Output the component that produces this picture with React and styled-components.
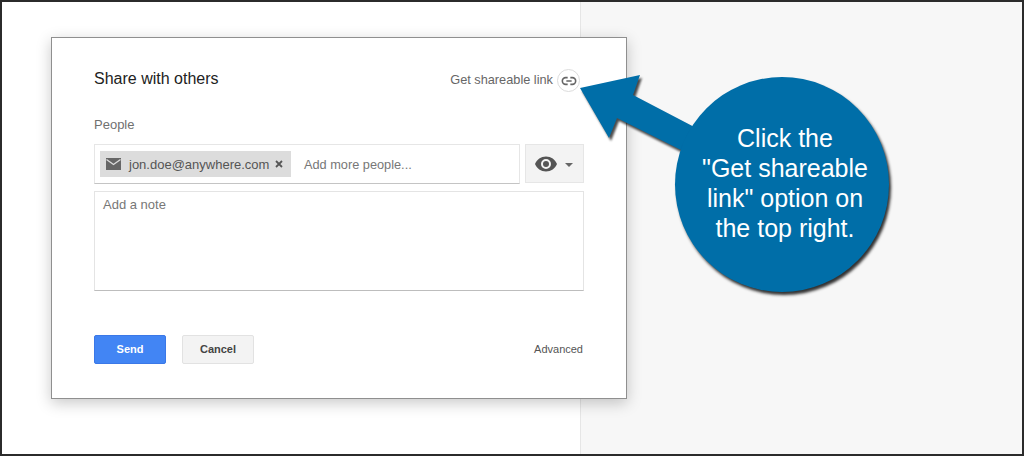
import React from "react";
import styled, { createGlobalStyle } from "styled-components";

const Global = createGlobalStyle`
  html, body { margin: 0; padding: 0; background: #fff; }
  * { box-sizing: border-box; }
`;

const Frame = styled.div`
  position: relative;
  width: 1024px;
  height: 456px;
  overflow: hidden;
  border: 2px solid #2b2b2b;
  display: grid;
  grid-template-columns: 579px 1fr;
  font-family: "Liberation Sans", Arial, sans-serif;
  background: #fff;
`;

const LeftPane = styled.div`
  background: #fff;
  border-right: 1px solid #e6e6e6;
`;

const RightPane = styled.div`
  background: #f7f7f7;
`;

const Dialog = styled.div`
  position: absolute;
  left: 49px;
  top: 35px;
  width: 576px;
  height: 362px;
  background: #fff;
  border: 1px solid #8f8f8f;
  box-shadow: 0 4px 14px rgba(0, 0, 0, 0.22);
  padding: 29px 42px 0;
  display: flex;
  flex-direction: column;
`;

const Header = styled.div`
  display: flex;
  justify-content: space-between;
  align-items: center;
  height: 24px;
`;

const Title = styled.div`
  font-size: 16px;
  color: #222;
`;

const LinkWrap = styled.div`
  display: flex;
  align-items: center;
  gap: 4px;
  font-size: 12.75px;
  color: #666;
  margin-top: 3px;
  margin-right: 4px;
`;

const LinkText = styled.span`
  margin-top: -2px;
`;

const LinkCircle = styled.span`
  width: 23px;
  height: 23px;
  border-radius: 50%;
  border: 1px solid #dcdcdc;
  background: #fff;
  display: flex;
  align-items: center;
  justify-content: center;
`;

const Label = styled.div`
  font-size: 13px;
  color: #707070;
  margin-top: 27px;
  line-height: 14px;
`;

const InputRow = styled.div`
  display: flex;
  gap: 5px;
  margin-top: 12px;
  height: 40px;
`;

const PeopleInput = styled.div`
  flex: 1;
  border: 1px solid #e6e6e6;
  border-bottom-color: #c4c4c4;
  display: flex;
  align-items: center;
  padding-left: 5px;
`;

const Chip = styled.div`
  width: 191px;
  height: 26px;
  background: #dcdcdc;
  display: flex;
  align-items: center;
  padding-left: 6px;
  color: #555;
`;

const ChipText = styled.span`
  margin-left: 8px;
  font-size: 13px;
  white-space: nowrap;
`;

const ChipClose = styled.svg`
  margin-left: 6px;
`;

const Placeholder = styled.span`
  font-size: 12.75px;
  color: #777;
  margin-left: 13px;
`;

const EyeButton = styled.div`
  width: 59px;
  height: 39px;
  background: #f3f3f3;
  border: 1px solid #e6e6e6;
  display: flex;
  align-items: center;
  padding-left: 8px;
  gap: 7px;
`;

const Caret = styled.span`
  width: 0;
  height: 0;
  border-left: 4px solid transparent;
  border-right: 4px solid transparent;
  border-top: 4px solid #666;
  margin-top: 2px;
`;

const NoteBox = styled.div`
  margin-top: 7px;
  height: 100px;
  border: 1px solid #e4e4e4;
  border-bottom-color: #bdbdbd;
  padding: 5px 8px;
  font-size: 13px;
  color: #777;
`;

const Footer = styled.div`
  display: flex;
  align-items: center;
  margin-top: 44px;
`;

const Button = styled.div`
  width: 72px;
  height: 29px;
  padding-bottom: 2px;
  border-radius: 2px;
  display: flex;
  align-items: center;
  justify-content: center;
  font-size: 11px;
  font-weight: bold;
  background: ${p => (p.$primary ? "#4285f4" : "#f3f3f3")};
  color: ${p => (p.$primary ? "#fff" : "#444")};
  border: 1px solid ${p => (p.$primary ? "#3b78e7" : "#e2e2e2")};
  margin-right: 16px;
`;

const Advanced = styled.div`
  margin-left: auto;
  margin-right: 1px;
  margin-top: -2px;
  font-size: 11px;
  color: #555;
`;

const Arrow = styled.svg`
  position: absolute;
  left: 0;
  top: 0;
  filter: drop-shadow(2px 3px 1px rgba(0, 0, 0, 0.7));
`;

const Bubble = styled.div`
  position: absolute;
  left: 673px;
  top: 75px;
  width: 214px;
  height: 215px;
  padding: 0 0 4px 6px;
  border-radius: 50%;
  background: #006ea8;
  box-shadow: 2px 3px 3px rgba(0, 0, 0, 0.8);
  color: #fff;
  font-size: 25px;
  line-height: 30px;
  text-align: center;
  white-space: nowrap;
  display: flex;
  flex-direction: column;
  align-items: center;
  justify-content: center;
`;

export default function App() {
  return (
    <>
      <Global />
      <Frame>
        <LeftPane />
        <RightPane />
        <Dialog>
          <Header>
            <Title>Share with others</Title>
            <LinkWrap>
              <LinkText>Get shareable link</LinkText>
              <LinkCircle>
                <svg width="16" height="16" viewBox="0 0 24 24" fill="none" stroke="#666" strokeWidth="2.4">
                  <path d="M10 7H7a5 5 0 0 0 0 10h3M14 7h3a5 5 0 0 1 0 10h-3M8 12h8" />
                </svg>
              </LinkCircle>
            </LinkWrap>
          </Header>
          <Label>People</Label>
          <InputRow>
            <PeopleInput>
              <Chip>
                <svg width="15" height="12" viewBox="0 0 15 12">
                  <path fill="#666" d="M0 0h15v12H0z" />
                  <path fill="none" stroke="#dcdcdc" strokeWidth="1.3" d="M0.5 1.5 7.5 6.5 14.5 1.5" />
                </svg>
                <ChipText>jon.doe@anywhere.com</ChipText>
                <ChipClose width="8" height="8" viewBox="0 0 8 8">
                  <path stroke="#555" strokeWidth="1.8" d="M1 1l6 6M7 1l-6 6" />
                </ChipClose>
              </Chip>
              <Placeholder>Add more people...</Placeholder>
            </PeopleInput>
            <EyeButton>
              <svg width="24" height="24" viewBox="0 0 24 24">
                <path fill="#555" d="M12 4.5C7 4.5 2.7 7.6 1 12c1.7 4.4 6 7.5 11 7.5s9.3-3.1 11-7.5c-1.7-4.4-6-7.5-11-7.5zM12 17a5 5 0 1 1 0-10 5 5 0 0 1 0 10zm0-8a3 3 0 1 0 0 6 3 3 0 0 0 0-6z" />
              </svg>
              <Caret />
            </EyeButton>
          </InputRow>
          <NoteBox>Add a note</NoteBox>
          <Footer>
            <Button $primary>Send</Button>
            <Button>Cancel</Button>
            <Advanced>Advanced</Advanced>
          </Footer>
        </Dialog>
        <Arrow width="1020" height="452" viewBox="2 2 1020 452">
          <path fill="#006ea8" d="M580 88 640 75 633 95 700 130 685 152 617 118 609 138z" />
        </Arrow>
        <Bubble>
          <div>Click the</div>
          <div>"Get shareable</div>
          <div>link" option on</div>
          <div>the top right.</div>
        </Bubble>
      </Frame>
    </>
  );
}
